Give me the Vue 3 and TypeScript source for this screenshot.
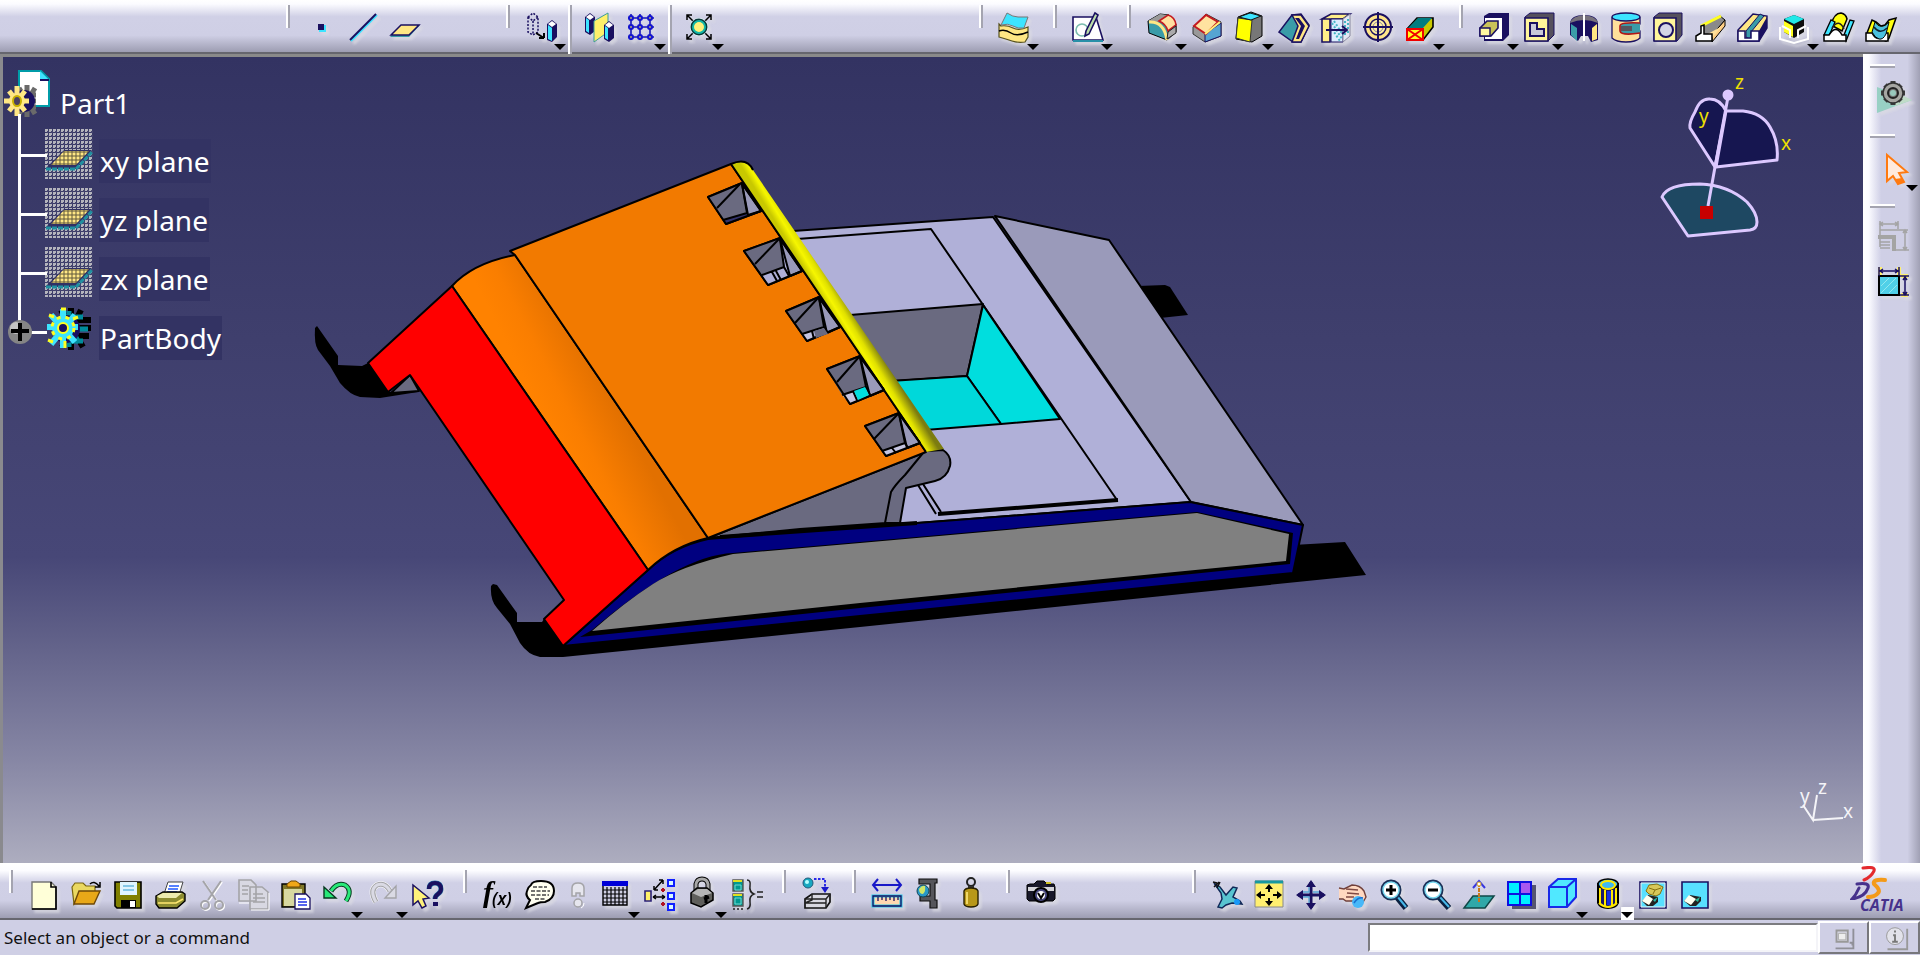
<script setup lang="ts">
import { ref } from 'vue'

interface Tool {
  icon: string
  label: string
  drop?: boolean
  lit?: boolean
  narrow?: boolean
  off?: boolean
}
interface Group {
  cls?: string
  tools: Tool[]
}
interface Pocket {
  id: string
  outline: string
  face: string
  strip: string
  side: string
  lines: string
  stripColor: string
}

const command = ref('')

const topLeft: Group[] = [
  { tools: [
    { icon: 'point', label: 'Point' },
    { icon: 'line', label: 'Line' },
    { icon: 'plane', label: 'Plane' }
  ] },
  { cls: 'far', tools: [{ icon: 'translate', label: 'Translation', drop: true }] },
  { cls: 'tall', tools: [
    { icon: 'mirror', label: 'Mirror' },
    { icon: 'pattern', label: 'Rectangular pattern', drop: true }
  ] },
  { cls: 'tall', tools: [{ icon: 'scale', label: 'Scaling', drop: true }] }
]

const topRight: Group[] = [
  { tools: [{ icon: 'surface', label: 'Thick surface', drop: true }] },
  { tools: [{ icon: 'sketch', label: 'Sketch', drop: true }] },
  { tools: [
    { icon: 'fillet', label: 'Edge fillet', drop: true },
    { icon: 'chamfer', label: 'Chamfer' },
    { icon: 'draft', label: 'Draft angle', drop: true },
    { icon: 'shell', label: 'Shell' },
    { icon: 'thickness', label: 'Thickness' },
    { icon: 'thread', label: 'Thread' },
    { icon: 'removeFace', label: 'Remove face', drop: true }
  ] },
  { tools: [
    { icon: 'pad', label: 'Pad', drop: true },
    { icon: 'pocket', label: 'Pocket', drop: true },
    { icon: 'shaft', label: 'Shaft' },
    { icon: 'groove', label: 'Groove' },
    { icon: 'hole', label: 'Hole' },
    { icon: 'rib', label: 'Rib' },
    { icon: 'slot', label: 'Slot' },
    { icon: 'stiffener', label: 'Stiffener', drop: true },
    { icon: 'loft', label: 'Multi-sections solid' },
    { icon: 'removeLoft', label: 'Removed multi-sections solid' }
  ] }
]

const bottomLeft: Group[] = [
  { tools: [
    { icon: 'newDoc', label: 'New' },
    { icon: 'open', label: 'Open' },
    { icon: 'save', label: 'Save' },
    { icon: 'print', label: 'Print' },
    { icon: 'cut', label: 'Cut', off: true },
    { icon: 'copy', label: 'Copy', off: true },
    { icon: 'paste', label: 'Paste' },
    { icon: 'undo', label: 'Undo', drop: true },
    { icon: 'redo', label: 'Redo', drop: true, off: true },
    { icon: 'help', label: "What's this?" }
  ] },
  { tools: [
    { icon: 'formula', label: 'Formula' },
    { icon: 'comment', label: 'Comment' },
    { icon: 'check', label: 'Check analysis', narrow: true, off: true },
    { icon: 'table', label: 'Design table', drop: true },
    { icon: 'relations', label: 'Knowledge inspector' },
    { icon: 'lock', label: 'Lock', drop: true },
    { icon: 'equations', label: 'Equivalent dimensions' }
  ] },
  { tools: [{ icon: 'catalog', label: 'Catalog' }] },
  { tools: [
    { icon: 'measure', label: 'Measure between' },
    { icon: 'caliper', label: 'Measure item' },
    { icon: 'weight', label: 'Measure inertia' }
  ] },
  { tools: [{ icon: 'camera', label: 'Capture' }] }
]

const bottomRight: Group = { tools: [
  { icon: 'fly', label: 'Fly mode' },
  { icon: 'fit', label: 'Fit all in' },
  { icon: 'pan', label: 'Pan' },
  { icon: 'rotate', label: 'Rotate' },
  { icon: 'zoomIn', label: 'Zoom in' },
  { icon: 'zoomOut', label: 'Zoom out' },
  { icon: 'normal', label: 'Normal view' },
  { icon: 'multi', label: 'Multi-view' },
  { icon: 'iso', label: 'Isometric view', drop: true },
  { icon: 'shading', label: 'Shading with edges', drop: true, lit: true },
  { icon: 'hide', label: 'Hide or show' },
  { icon: 'swap', label: 'Swap visible space' }
] }

const sideGroups: Tool[][] = [
  [{ icon: 'workbench', label: 'Part Design' }],
  [{ icon: 'select', label: 'Select', drop: true }],
  [
    { icon: 'exitDims', label: 'Dimension manager', off: true },
    { icon: 'dims', label: 'Dimensions' }
  ]
]

const planes = ['xy plane', 'yz plane', 'zx plane']

const icons: Record<string, string> = {
  point: `<path d="M14 14h7v7h-7z" fill="#3de4ff"/><path d="M13 13h6v6h-6z" fill="#1a1060"/>`,
  line: `<path d="M4 30L30 4" stroke="#3de4ff" stroke-width="2"/><path d="M3 29L29 3" stroke="#1a1060" stroke-width="2"/>`,
  plane: `<path d="M1 26l11-12h19L20 26z" fill="#3a9ca8"/><path d="M2 24l10-10h18l-10 10z" fill="#ffe784" stroke="#1a1060" stroke-width="1.5"/>`,
  translate: `<path d="M3 6l5-4 5 4v15l-5 3-5-3zM3 6l5 4 5-4M8 10v13" fill="none" stroke="#1a1060" stroke-width="1.5" stroke-dasharray="2 1.5"/><path d="M11 22l8 5M19 27v-5M19 27h-5" stroke="#000" stroke-width="2"/><path d="M22 13l5-4 5 4v13l-5 5-5-2z" fill="#1a1060"/><path d="M23 14l4 3v13l-4-2z" fill="#3de4ff"/><path d="M23 13l4-3 4 3-4 3z" fill="#fff"/>`,
  mirror: `<path d="M2 6l5-4 5 4v14l-5 4-5-3z" fill="#1a1060"/><path d="M3 7l3 2v13l-3-2z" fill="#3de4ff"/><path d="M3 6l4-3 4 3-4 3z" fill="#fff"/><path d="M11 10L25 2v19l-14 10z" fill="#fff06a" stroke="#3a9c98"/><path d="M21 14l5-4 5 4v13l-5 4-5-3z" fill="#1a1060"/><path d="M22 15l3 2v12l-3-2z" fill="#3de4ff"/><path d="M22 14l4-3 4 3-4 3z" fill="#fff"/>`,
  pattern: `<path d="M6 3v26M15 3v26M25 3v26M3 7h26M3 16h26M3 26h26" stroke="#1414b8" stroke-width="1.6"/><g fill="#b0a878" stroke="#1414d0" stroke-width="2"><circle cx="6" cy="7" r="2"/><circle cx="15" cy="7" r="2"/><circle cx="25" cy="7" r="2"/><circle cx="6" cy="16" r="2"/><circle cx="15" cy="16" r="2"/><circle cx="25" cy="16" r="2"/><circle cx="6" cy="26" r="2"/><circle cx="15" cy="26" r="2"/><circle cx="25" cy="26" r="2"/></g>`,
  scale: `<path d="M4 4l24 24M28 4L4 28M4 9V4h5M23 4h5v5M4 23v5h5M28 23v5h-5" fill="none" stroke="#000" stroke-width="1.5"/><circle cx="16" cy="16" r="9" fill="#e8ffff"/><circle cx="16" cy="16" r="7" fill="#fff27a" stroke="#083838" stroke-width="3"/><circle cx="16" cy="16" r="6" fill="none" stroke="#12b8a8" stroke-width="2"/>`,
  surface: `<path d="M1 13l2 2q6-1 12 2t15-1v10l-3 5q-7 1-13-1T1 26z" fill="#ffe784" stroke="#55501e" stroke-width="1.2"/><path d="M3 14L9 2q6 4 11 4t10 0l-4 11q-6 1-11-2t-12-1z" fill="#3de4ff" stroke="#777"/><path d="M1 20q6-2 12 2t17-1" fill="none" stroke="#000" stroke-width="1.5"/>`,
  sketch: `<path d="M3 6h21l7 23H1V6z" fill="#fff" stroke="#1a1060" stroke-width="1.6"/><path d="M1 30h30" stroke="#2890a8" stroke-width="2"/><circle cx="10" cy="19" r="6" fill="none" stroke="#7abcae" stroke-width="1.6"/><path d="M23 2l3 2-9 19-4 2 1-5z" fill="#bda" stroke="#1a1060" stroke-width="1.6"/>`,
  fillet: `<path d="M2 10l12-7 9 1 7 9v8l-9 8-18-7z" fill="#3a9ca8" stroke="#000"/><path d="M2 10l12-7 8 1-9 7z" fill="#999"/><path d="M3 11q15-1 18 18" fill="none" stroke="#ffe784" stroke-width="3"/><path d="M13 10l9-6q7 2 8 10l-8 6q-2-7-9-10z" fill="#ffe0a0" stroke="#c41a20" stroke-width="1.6"/><path d="M22 21l8-6v7l-9 6z" fill="#aaa" stroke="#222"/>`,
  chamfer: `<path d="M2 16L15 3l15 8v14l-16 6L2 23z" fill="#999" stroke="#333"/><path d="M30 12v13l-16 6v-8z" fill="#56a4d2" stroke="#1a1060"/><path d="M3 15L15 4l12 7-12 12z" fill="#ffe3a0" stroke="#c41a20" stroke-width="2"/><path d="M29 11L14 23" stroke="#fff17a" stroke-width="2"/>`,
  draft: `<path d="M5 6l13-5 11 4v20l-10 6-16-3z" fill="#777" stroke="#000"/><path d="M5 7l14 2-2 22-14-4z" fill="#ffff00" stroke="#333"/><path d="M6 6l11-4 11 3-10 4z" fill="#3de4ff" stroke="#111"/>`,
  shell: `<path d="M14 4l9-1 8 11-8 17h-8L1 21z" fill="#3a9ca8" stroke="#1a1060" stroke-width="1.5"/><path d="M14 4h9l8 11-8 16h-9l6-16z" fill="#ffe784" stroke="#1a1060" stroke-width="1.5"/><path d="M17 7h4l6 8-6 13h-3l5-13z" fill="#1a1060"/>`,
  thickness: `<path d="M2 8l9-5h19l-7 5zM2 8h8v23H2z" fill="#ffee88" stroke="#1a1060" stroke-width="1.6"/><path d="M11 8h12v23H11z" fill="#def" stroke="#1a1060"/><path d="M23 8l7-5v22l-7 6z" fill="#e4e8f4" stroke="#8888a0"/><path d="M12 12l10 16M12 18l8 12M14 10l9 14M25 10v16M28 8v15" stroke="#46b6c6" stroke-width="2" stroke-dasharray="2 2"/><path d="M6 19h20M22 15l5 4-5 4" fill="none" stroke="#1a1060" stroke-width="2"/>`,
  thread: `<circle cx="16" cy="16" r="13" fill="#ffe58a" stroke="#1a1060" stroke-width="2"/><circle cx="16" cy="16" r="8" fill="#fff0a0" stroke="#1a1060" stroke-width="1.5"/><circle cx="16" cy="16" r="5" fill="none" stroke="#8c86a0"/><path d="M1 16h30M16 1v30" stroke="#1a1060" stroke-width="2"/>`,
  removeFace: `<path d="M3 18L13 7h16v9L19 29H3z" fill="#c8c800" stroke="#000" stroke-width="1.6"/><path d="M4 17l10-10h14l-9 10z" fill="#007c80"/><path d="M3 18h16v11H3z" fill="#ffff20" stroke="#f00000" stroke-width="2"/><path d="M3 18l16 11M19 18L3 29" stroke="#f00000" stroke-width="2"/>`,
  pad: `<path d="M6 5l5-3h20v22l-6 6H6z" fill="#1a1060"/><path d="M7 7h17v21H7z" fill="#fff"/><path d="M2 17l7-7h11v7l-7 8H2z" fill="#c9c258" stroke="#1a1060" stroke-width="1.6"/><path d="M2 17h10v8H2z" fill="#fff9a0" stroke="#1a1060" stroke-width="1.4"/>`,
  pocket: `<path d="M2 6l5-4h24v22l-6 6H2z" fill="#55505c" stroke="#1a1060"/><path d="M2 7h23v23H2z" fill="#fff59a" stroke="#1a1060" stroke-width="1.6"/><path d="M7 12h7v6h7v7H7z" fill="#c9c9d8" stroke="#1a1060" stroke-width="2"/>`,
  shaft: `<path d="M2 12q1-8 14-8t14 8v17l-7 2-3-6h-7l-3 5-8-6z" fill="#1a1060"/><path d="M2 12q2-7 14-8 12 1 14 8-14-6-28 0z" fill="#77727c"/><path d="M3 13l6 4v13l-6-6z" fill="#3a9ca8"/><path d="M29 13l-5 4v13l5-2z" fill="#ffe784"/><path d="M16 2v28" stroke="#fff" stroke-width="2"/>`,
  groove: `<path d="M2 7v20q4 4 14 4t14-4v-7l-8-3 8-4V7z" fill="#ffe09a" stroke="#1a1060" stroke-width="1.3"/><ellipse cx="16" cy="6" rx="14" ry="4" fill="#3de4ff" stroke="#1a1060" stroke-width="1.3"/><path d="M30 12q-20-1-20 3v5q1 5 20 2" fill="#3a9ca8" stroke="#b01818" stroke-width="1.6"/><path d="M11 15h11v5H11z" fill="#56545e"/>`,
  hole: `<path d="M2 6l5-4h23v22l-5 6H2z" fill="#55505c" stroke="#1a1060"/><path d="M2 7h22v23H2z" fill="#fff59a" stroke="#1a1060" stroke-width="1.6"/><circle cx="14" cy="19" r="7" fill="#d5d5e6" stroke="#1a1060" stroke-width="2"/>`,
  rib: `<path d="M18 23L31 9v6L18 31z" fill="#ffcf84" stroke="#000"/><path d="M7 15L26 5l5 4-13 15-8 1z" fill="#8a8a8a" stroke="#000"/><path d="M12 24l16-9-10 12z" fill="#ffe09a"/><path d="M7 15L27 5" stroke="#ffff20" stroke-width="3"/><path d="M2 25l5-3v-7l3-1v9h8v7H2z" fill="#fff" stroke="#000" stroke-width="1.5"/>`,
  slot: `<path d="M2 19L17 3l14 2v12L23 30H2z" fill="#ffe784" stroke="#1a1060" stroke-width="1.4"/><path d="M10 20L24 3l4 2-13 16v8l-5-3z" fill="#3a9ca8" stroke="#1a1060"/><path d="M2 20h7v7h6v-7h8v10H2z" fill="#fff" stroke="#1a1060" stroke-width="1.5"/><path d="M23 20l8-14v11l-8 13z" fill="#1a1060"/>`,
  stiffener: `<path d="M2 16v12l14 4 14-4V16" fill="none" stroke="#fff" stroke-width="2"/><path d="M6 8l10-4 10 4v13l-10 6-10-6z" fill="#0e0e0e"/><path d="M6 8l10-4 10 4-10 5z" fill="#20e8e8"/><path d="M6 10l9 5v11l-9-5z" fill="#ffff20"/><path d="M4 15l8 4v8M28 15l-8 4v8" fill="none" stroke="#fff" stroke-width="2"/>`,
  loft: `<path d="M8 14q3-12 10-12 5 1 6 6l-5 12z" fill="#ffff10" stroke="#000" stroke-width="1.5"/><path d="M1 24L8 9l4 2-6 14zM21 24l6-15 4 1-8 20z" fill="#3de4ff" stroke="#000" stroke-width="1.3"/><path d="M9 17q7-10 12 1" fill="none" stroke="#222" stroke-width="1.5"/><path d="M1 24h5q7-11 13 0h4v6H1z" fill="#fff" stroke="#000" stroke-width="1.5"/>`,
  removeLoft: `<path d="M2 22L7 9l4 2 5 4 4-1 4-5 7-2-7 20-3 3z" fill="#ffff10" stroke="#000" stroke-width="1.5"/><path d="M1 22h6q6 11 12 0h4v8H1z" fill="#fff" stroke="#000" stroke-width="1.5"/><path d="M10 11q6 9 14 0l-3 12q-3 6-7 5-4-1-7-7z" fill="#4ac0de" stroke="#000"/><path d="M9 16q6 8 13 1" fill="none" stroke="#123" stroke-width="1.4"/>`,
  newDoc: `<path d="M4 3h19l5 5v22H4z" fill="#ffffd8" stroke="#777" stroke-width="1.4"/><path d="M23 3v5h5v22H4" fill="none" stroke="#000" stroke-width="1.6"/>`,
  open: `<path d="M2 8l3-4h8l3 3h9v7H9L4 25z" fill="#ead860" stroke="#786410" stroke-width="1.2"/><path d="M9 12h21l-6 13H4z" fill="#e8a818" stroke="#6e4808" stroke-width="1.4"/><path d="M20 5q4-4 9 2M30 3v5h-5" fill="none" stroke="#000" stroke-width="1.5"/>`,
  save: `<path d="M3 3h26v26H5l-2-2z" fill="#808000" stroke="#000" stroke-width="1.6"/><path d="M8 3h17v13H8z" fill="#dff4ff"/><path d="M11 7h11M11 11h11" stroke="#68b8e0" stroke-width="1.5"/><path d="M9 21h15v8H9z" fill="#000"/><path d="M18 22h5v6h-5z" fill="#fff"/>`,
  print: `<path d="M10 15l4-12h15l-4 13z" fill="#fff" stroke="#444"/><path d="M15 7h10M14 10h10M13 13h10" stroke="#2058ff" stroke-width="1.6"/><path d="M2 17l7-4h19l3 2v7l-8 7H5l-3-4z" fill="#8c8c30" stroke="#000" stroke-width="1.4"/><path d="M3 17l6-3h19l-6 5H5z" fill="#ecebae"/><path d="M4 24h18l7-4" fill="none" stroke="#ffe870" stroke-width="1.6"/>`,
  cut: `<g transform="translate(1 1)" stroke="#fff" stroke-width="2" fill="none"><path d="M7 2l13 19M25 2L12 21"/><circle cx="9" cy="26" r="4"/><circle cx="23" cy="26" r="4"/></g><g stroke="#a4a4a8" stroke-width="2" fill="none"><path d="M7 2l13 19M25 2L12 21"/><circle cx="9" cy="26" r="4"/><circle cx="23" cy="26" r="4"/></g>`,
  copy: `<g fill="#d8d8e2" stroke="#a4a4a8" stroke-width="1.6"><path d="M1 1h12l5 5v16H1zM12 8h12l6 5v17H12z"/><path d="M4 7h7M4 11h6M4 15h6M15 15h10M15 19h12M15 23h12"/></g><path d="M31 14v17H13M1 24h10" fill="none" stroke="#fff"/>`,
  paste: `<path d="M2 5h23v23H2z" fill="#807828" stroke="#000" stroke-width="1.4"/><path d="M4 10h18v17H4z" fill="#d8d8a0"/><path d="M7 8V5l4-3h5l4 3v3z" fill="#f0a818" stroke="#6a4400"/><path d="M15 15h11l4 4v11H15z" fill="#fff" stroke="#1a1060" stroke-width="1.3"/><path d="M18 20h8M18 23h9M18 26h9" stroke="#2030e8" stroke-width="1.6"/>`,
  undo: `<path d="M9 12q6-9 14-6 8 5 1 16" fill="none" stroke="#083820" stroke-width="5"/><path d="M9 12q6-9 14-6 8 5 1 16" fill="none" stroke="#28e878" stroke-width="3"/><path d="M2 8v11h12z" fill="#28e878" stroke="#083820" stroke-width="1.4"/>`,
  redo: `<path d="M23 12q-5-9-13-6-8 5-1 17" fill="none" stroke="#fff" stroke-width="6"/><path d="M23 12q-5-9-13-6-8 5-1 17" fill="none" stroke="#a4a4a8" stroke-width="5"/><path d="M23 12q-5-9-13-6-8 5-1 17" fill="none" stroke="#dadae4" stroke-width="3"/><path d="M29 7v12H18z" fill="#dadae4" stroke="#a4a4a8" stroke-width="1.4"/>`,
  help: `<path d="M1 6v20l5-4 4 7 4-2-3-7 6-1z" fill="#fff27a" stroke="#1a1060" stroke-width="1.5"/><path d="M17 10q0-6 6-6t6 6q0 3-3 5t-3 5" fill="none" stroke="#2a7aa8" stroke-width="5"/><path d="M17 10q0-6 6-6t6 6q0 3-3 5t-3 5" fill="none" stroke="#1a1060" stroke-width="4"/><path d="M21 23h5v4h-5z" fill="#1a1060"/>`,
  formula: `<text x="1" y="23" font-family="Liberation Serif, serif" font-style="italic" font-weight="700" font-size="30" fill="#000">f</text><text x="10" y="26" font-family="Noto Sans, sans-serif" font-style="italic" font-weight="600" font-size="17" fill="#000">(x)</text>`,
  comment: `<path d="M7 6q1-4 10-4 13 0 13 10 0 8-9 11-5 0-7 1L2 29l4-8Q1 17 3 12q1-4 4-6z" fill="#fffff0" stroke="#000" stroke-width="2"/><path d="M9 8h14M7 12h19M7 16h18M11 20h10" stroke="#444" stroke-width="1.6" stroke-dasharray="4 1.5"/>`,
  check: `<path d="M10 17V9q0-5 6-5t6 5v8h-4v-3h-4v3z" fill="#e6e6ee" stroke="#a4a4a8" stroke-width="1.5"/><circle cx="16" cy="24" r="4" fill="#e6e6ee" stroke="#a4a4a8" stroke-width="1.5"/><path d="M19 29q3-1 3-5" stroke="#fff" fill="none"/>`,
  table: `<path d="M4 6h24v20H4z" fill="#cfcfe2" stroke="#000" stroke-width="1.4"/><path d="M4 11h24M4 15h24M4 19h24M4 23h24M8 8v18M12 8v18M16 8v18M20 8v18M24 8v18" stroke="#000" stroke-width="1.2"/><path d="M3 2h26v5H3z" fill="#0000d8"/>`,
  relations: `<path d="M1 12h6v10H1z" fill="#fff06a" stroke="#2a2078" stroke-width="1.6"/><path d="M9 18h12M9 18l3-2M9 18l3 2M21 18l-3-2M21 18l-3 2M10 11l9-10M19 1v4M19 1h-4M10 11v-4M10 11h4" stroke="#000" stroke-width="1.5"/><g fill="#d8f8ff" stroke="#1020ff" stroke-width="2"><path d="M24 1h6v6h-6zM24 14h6v6h-6zM24 25h6v6h-6z"/></g><path d="M17 11h4M19 9v4M17 25h4M19 23v4" stroke="#b01020" stroke-width="2"/>`,
  lock: `<path d="M10 13V5q1-5 6-5t6 5v8" fill="none" stroke="#000" stroke-width="5"/><path d="M10 13V5q1-5 6-5t6 5v8" fill="none" stroke="#a8a8a8" stroke-width="3"/><path d="M5 14l6-5h10l6 5v7l-12 7-10-4z" fill="#60605c" stroke="#000" stroke-width="1.5"/><path d="M6 14l6-4h9l5 4-11 4z" fill="#b6b6b6"/><path d="M20 16v8M18 20l5-2" stroke="#000" stroke-width="3"/>`,
  equations: `<path d="M2 1h10v11H2zM2 15h10v12H2z" fill="#009890" stroke="#555" stroke-width="1.4"/><path d="M2 2h9M2 16h9" stroke="#e0e020" stroke-width="2"/><path d="M4 6h6v5H4zM4 19h6v6H4z" fill="none" stroke="#70d8d0"/><path d="M16 1q4 0 3 6t4 8q-5 2-4 8t-3 7M26 13h6M26 18h6M2 30h2M6 30h2M10 30h2" fill="none" stroke="#222" stroke-width="1.5"/>`,
  catalog: `<circle cx="7" cy="4" r="5" fill="#18a8c0" stroke="#205878"/><circle cx="6" cy="3" r="2" fill="#b8ffff"/><path d="M13 0h11v10" fill="none" stroke="#2828e8" stroke-width="2" stroke-dasharray="2.5 1.5"/><path d="M20 8h8l-4 6z" fill="#1818c8"/><path d="M4 20l7-5h18v8l-4 6H4z" fill="#d8d8e0" stroke="#111" stroke-width="1.7"/><path d="M4 20h21v9M25 20l4-5M11 15v6l-7 3h21" fill="none" stroke="#222" stroke-width="1.4"/>`,
  measure: `<path d="M2 6h28M7 0L2 6l5 6M25 0l5 6-5 6" fill="none" stroke="#1818c8" stroke-width="2"/><path d="M2 17h28v10H2z" fill="#ffd8b0" stroke="#28c8e8" stroke-width="3"/><path d="M2 17h28v10H2zM7 18v4M11 18v3M15 18v4M19 18v3M23 18v4M27 18v3" fill="none" stroke="#1a1060" stroke-width="1.3"/>`,
  caliper: `<path d="M6 0h18v4h-2v17h2v8h-7v-7H7v-5h10V5H6z" fill="#55555a" stroke="#111" stroke-width="1.2"/><circle cx="10" cy="12" r="6" fill="#2898c8" stroke="#145"/><path d="M6 10q3-4 6-3 1 5-2 8-4 0-4-5z" fill="#d0e868"/>`,
  weight: `<circle cx="16" cy="3" r="4" fill="none" stroke="#222" stroke-width="2"/><path d="M13 7h6v4h-6z" fill="#333"/><path d="M9 12q1-3 7-3t7 3v13q-1 3-7 3t-7-3z" fill="#b89818" stroke="#2a2200" stroke-width="1.4"/><path d="M12 13v12" stroke="#f0d868" stroke-width="2"/>`,
  camera: `<path d="M2 6l3-1h4l3-3h7l3 3h7l1 3v12l-2 2H4l-2-2z" fill="#18182a" stroke="#000"/><path d="M3 8h26v4H3z" fill="#d4d4d8"/><circle cx="16" cy="16" r="7" fill="#484880" stroke="#000" stroke-width="2"/><circle cx="16" cy="16" r="4" fill="#fff"/><path d="M13 14l3 5 3-5" fill="none" stroke="#000" stroke-width="2"/><path d="M21 4h5" stroke="#d0c020" stroke-width="2"/>`,
  fly: `<path d="M3 4l6 4 6 8 7-8 4 1-4 9 7 4 2 3-10-1-6 2-4 3-4-1 4-8-1-6z" fill="#58c4d0" stroke="#102858" stroke-width="1.5"/><path d="M3 8l5-5M2 3l4 1M9 3L6 9" stroke="#111" stroke-width="1.5"/><circle cx="26" cy="23" r="3" fill="#1898f8"/>`,
  fit: `<path d="M2 2h28v26H2z" fill="#ffef70" stroke="#888"/><path d="M2 3h28" stroke="#1898a0" stroke-width="3"/><path d="M16 8v5M16 19v5M6 16h6M20 16h6" stroke="#000" stroke-width="2"/><path d="M12 10l4-5 4 5zM12 22l4 5 4-5zM8 12l-5 4 5 4zM24 12l5 4-5 4z" fill="#000"/>`,
  pan: `<path d="M16 3v26M3 16h26" stroke="#1a1060" stroke-width="3"/><path d="M11 8l5-7 5 7zM11 24l5 7 5-7zM8 11l-7 5 7 5zM24 11l7 5-7 5z" fill="#1a1060"/><path d="M14 8v5H8M24 13h-6M14 24v-6H8" fill="none" stroke="#58a8d8" stroke-width="1.3"/>`,
  rotate: `<path d="M2 9l5 1 8-4q8 0 12 6l2 6-4 7-8-3H9l-3-2H2" fill="#ffd8c0" stroke="#70403c" stroke-width="1.4"/><path d="M9 10l12 1M10 14l12 1M9 18h8" stroke="#804a44" stroke-width="1.4" fill="none"/><circle cx="21" cy="23" r="6" fill="#48b8f8"/><path d="M17 24q4-6 9-5" fill="none" stroke="#1870d0" stroke-width="1.5"/>`,
  zoomIn: `<path d="M18 18l9 11" stroke="#0a2040" stroke-width="6"/><path d="M18 17l9 11" stroke="#48b8e8" stroke-width="2"/><circle cx="12" cy="11" r="9" fill="#fff" stroke="#1a3058" stroke-width="3"/><circle cx="12" cy="11" r="8" fill="#fff" stroke="#78d8f0" stroke-width="1.5"/><path d="M12 6v10M7 11h10" stroke="#000" stroke-width="3"/>`,
  zoomOut: `<path d="M18 18l10 11" stroke="#0a2040" stroke-width="6"/><path d="M18 17l10 11" stroke="#48b8e8" stroke-width="2"/><circle cx="12" cy="11" r="9" fill="#fff" stroke="#1a3058" stroke-width="3"/><circle cx="12" cy="11" r="8" fill="#fff" stroke="#78d8f0" stroke-width="1.5"/><path d="M7 11h10" stroke="#000" stroke-width="3"/>`,
  normal: `<path d="M1 29l9-12h21l-9 12z" fill="#30a8a8" stroke="#104848" stroke-width="1.5"/><path d="M16 23V4" stroke="#c87818" stroke-width="2" stroke-dasharray="4 1"/><path d="M10 9l6-7 6 7" fill="none" stroke="#3838e0" stroke-width="2"/><circle cx="16" cy="5" r="2" fill="#fff" stroke="#d8a820"/>`,
  multi: `<path d="M7 6h24v24H7z" fill="#555570"/><path d="M3 3h23v23H3z" fill="#00f0ff" stroke="#1010e0" stroke-width="2"/><path d="M16 4h9v10h-9z" fill="#a858f0"/><path d="M15 3v23M3 15h23" stroke="#1010e0" stroke-width="2"/>`,
  iso: `<path d="M2 8l9-8h18v18l-9 10H2z" fill="#50e8ff" stroke="#1828e8" stroke-width="2"/><path d="M2 8h18v20M20 8l9-8" fill="none" stroke="#1828e8" stroke-width="2"/>`,
  shading: `<path d="M6 5v19q2 5 10 5t10-5V5z" fill="#18186a" stroke="#000" stroke-width="2"/><path d="M8 9v15M24 9v15M13 11v16M20 11v16" stroke="#ffe800" stroke-width="2"/><path d="M15 12h4v14h-4z" fill="#1830e0"/><ellipse cx="16" cy="5" rx="10" ry="5" fill="#40b8f0" stroke="#000" stroke-width="1.5"/><ellipse cx="16" cy="6" rx="7" ry="4" fill="none" stroke="#ffe800" stroke-width="2"/><path d="M7 24q9 8 18 0" fill="none" stroke="#ffe800" stroke-width="2"/>`,
  hide: `<path d="M3 3h26v26H3z" fill="#58e0ff" stroke="#1a1060" stroke-width="1.6"/><path d="M4 4h24v24H4z" fill="none" stroke="#eee"/><path d="M9 12l3-6 8-1 6 3-3 7-4 2-7-2z" fill="#d8c858" stroke="#857010"/><path d="M12 9l6 2-2 4M18 11l6-2" fill="none" stroke="#857010"/><path d="M5 22l6-6 10 2v5l-5 4h-6z" fill="#222"/><path d="M5 22l5-6 6 4-4 6z" fill="#fffff0"/><path d="M16 21l5-3-3 5z" fill="#28b8a8"/>`,
  swap: `<path d="M3 3h26v26H3z" fill="#58e0ff" stroke="#1a1060" stroke-width="1.6"/><path d="M5 22l6-6 11 2v4l-5 5h-6z" fill="#222"/><path d="M5 22l5-6 7 4-5 6z" fill="#fffff0"/><path d="M16 21l5-3-2 5z" fill="#28b898"/>`,
  workbench: `<path d="M0 7l35 13L0 33z" fill="#98d0c4"/><path d="M18 12l17 8-17 6z" fill="#c0dcc8"/><g transform="translate(16 13)"><g stroke="#3a3a3a" stroke-width="5"><path d="M0-12V12M-12 0H12M-8-8L8 8M8-8L-8 8"/></g><circle r="10" fill="#a6a6a2" stroke="#333" stroke-width="1.5"/><circle r="5" fill="#777" stroke="#222" stroke-width="2"/><circle r="3" fill="#98c8bc"/></g>`,
  select: `<g transform="translate(2 4)"><path d="M8 1v26l6-5 5 8 6-2-5-9 8-1z" fill="#ffeadd" stroke="#ff7a10" stroke-width="2"/><path d="M16 25l3 5 6-2-2-4" fill="#ff7a10"/></g>`,
  exitDims: `<g fill="none" stroke="#a4a4a4" stroke-width="1.5"><path d="M3 1v26M21 1v8M3 4h18M3 10h28M28 10v20M19 30h13M6 2L3 4l3 2M18 2l3 2-3 2M26 13l2-3 2 3M26 27l2 3 2-3"/><path d="M1 17h16v14" stroke-width="4"/><path d="M3 22h10M3 25h10M3 28h10"/></g>`,
  dims: `<path d="M2 10h20v19H2z" fill="#50d0e8" stroke="#000" stroke-width="2"/><path d="M4 27l15-15M4 20l8-8M12 27l8-8" stroke="#90e8f0"/><path d="M3 1v8M22 1v8M24 10h7M24 29h7" stroke="#fff070" stroke-width="4"/><path d="M2 1v9M22 1v9M3 5h18M23 10h9M23 29h9M28 11v18M6 3L3 5l3 2M18 3l3 2-3 2M26 14l2-3 2 3M26 26l2 3 2-3" fill="none" stroke="#1a1060" stroke-width="1.5"/>`,
  message: `<path d="M8 8h12v12H8z" fill="#d8d8e6" stroke="#999" stroke-width="2"/><path d="M10 11h8v7h-8z" fill="#eee" stroke="#aaa"/><path d="M26 6v21H7M22 21h3v3" fill="none" stroke="#909098" stroke-width="2"/>`,
  info: `<circle cx="16" cy="14" r="9" fill="#e2e2ea" stroke="#999"/><path d="M16 8v2M14 13h2v7M13 20h6" stroke="#777" stroke-width="2"/><path d="M29 6v22H8" fill="none" stroke="#999" stroke-width="2"/>`
}

const pockets: Pocket[] = [
  { id: 'a', outline: '708,197 742,183 761,211 726,224', face: '708,197 742,183 747,213 723,220', strip: '723,220 747,213 748,216 726,224', side: '742,184 761,211 748,215', lines: 'M717 208L740 184M742 184L747 213L723 220', stripColor: '#33336c' },
  { id: 'b', outline: '744,251 780,238 802,271 768,285', face: '744,251 780,238 785,267 762,275', strip: '762,275 785,267 789,276 768,285', side: '780,239 802,271 790,276', lines: 'M755 264L779 239M780 239L784 267L762 275M784 267L789 276M772 272L777 281M776 271L781 280', stripColor: '#b0b0d8' },
  { id: 'c', outline: '786,311 819,297 840,327 807,341', face: '786,311 819,297 825,326 802,334', strip: '802,334 813,331 814,338 807,341', side: '819,298 840,327 827,333', lines: 'M795 323L818 298M819 298L824 327L802 334M824 327L828 333M812 331L814 339', stripColor: '#c4c4e0' },
  { id: 'd', outline: '827,369 860,356 884,390 850,404', face: '827,369 860,356 866,387 842,395', strip: '842,395 853,391 857,400 850,404', side: '860,357 884,390 870,396', lines: 'M837 382L859 357M860 357L866 387L842 395M866 387L870 395M853 391L857 400', stripColor: '#c4c4e0' },
  { id: 'e', outline: '865,426 899,413 920,443 886,456', face: '865,426 899,413 905,443 882,451', strip: '882,451 905,443 908,448 886,456', side: '899,414 920,443 907,448', lines: 'M874 439L898 414M899 414L905 443L882 451M905 443L908 448M892 448L896 453', stripColor: '#c4c4e0' }
]
</script>

<template>
  <main class="app">
    <header class="bar top">
      <div v-for="(g, i) in topLeft" :key="'tl' + i" class="group" :class="g.cls">
        <button v-for="t in g.tools" :key="t.icon" type="button" class="tool" :class="{ drop: t.drop }" :aria-label="t.label">
          <svg viewBox="0 0 32 32" v-html="icons[t.icon]"></svg>
        </button>
      </div>
      <div class="space"></div>
      <div v-for="(g, i) in topRight" :key="'tr' + i" class="group" :class="{ next: i > 0 }">
        <button v-for="t in g.tools" :key="t.icon" type="button" class="tool" :class="{ drop: t.drop }" :aria-label="t.label">
          <svg viewBox="0 0 32 32" v-html="icons[t.icon]"></svg>
        </button>
      </div>
    </header>

    <div class="work">
      <section class="view" aria-label="3D view">
        <svg class="scene" viewBox="3 57 1860 806" preserveAspectRatio="xMinYMin meet">
          <defs>
            <linearGradient id="bend" gradientUnits="userSpaceOnUse" x1="550" y1="428" x2="612" y2="396">
              <stop offset="0" stop-color="#ff8200" />
              <stop offset="0.35" stop-color="#fa7e00" />
              <stop offset="1" stop-color="#e27000" />
            </linearGradient>
            <linearGradient id="tube" gradientUnits="userSpaceOnUse" x1="828" y1="308" x2="846" y2="297">
              <stop offset="0" stop-color="#c8c800" />
              <stop offset="0.3" stop-color="#f6f600" />
              <stop offset="0.55" stop-color="#e0e000" />
              <stop offset="1" stop-color="#7c7c10" />
            </linearGradient>
          </defs>
          <g stroke="#000" stroke-width="2" stroke-linejoin="round">
            <polygon points="1138,286 1165,285 1170,287 1188,315 1160,318" fill="#000" stroke="none" />
            <path d="M317 326L338 356V365L362 366L368 363L388 392L418 392L380 398L360 397Q350 395 340 383L330 366L318 350Q314 344 315 328Z" fill="#000" stroke="none" />
            <path d="M493 584L497 585L517 613V622H542L544 619L563 646L1293 545L1345 542L1366 575L860 627L563 657H540Q528 655 520 643L510 624L497 608Q490 600 491 586Z" fill="#000" stroke="none" />
            <polygon points="391,393 410,375 419,391" fill="#6a6a80" />
            <polygon points="793,231 993,217 1191,502 917,523 870,525" fill="#b0b0d8" />
            <polygon points="995,216 1109,240 1303,525 1191,502" fill="#9a9aba" />
            <path d="M797 239L931 229L1117 500" fill="none" />
            <polygon points="850,315 983,304 967,376 895,381" fill="#6a6a80" />
            <polygon points="983,305 967,376 1001,424 1060,419" fill="#00dede" />
            <polygon points="890,381 967,376 1001,424 925,430" fill="#00d8da" />
            <path d="M918 485L936 514M923 484L941 512" fill="none" />
            <path d="M938 514L1118 500" fill="none" stroke-width="4" />
            <path d="M563 646L648 570Q672 547 708 539L800 531L917 523L1190 502L1303 525L1293 573L860 616Z" fill="#000080" />
            <path d="M580 637L592 630Q680 555 733 553L860 542L1197 512L1293 533L1290 564L860 608Z" fill="#000" stroke="none" />
            <path d="M592 631Q625 602 653 584T733 554L860 543L1197 513L1289 534L1286 561L860 603Z" fill="#808080" stroke="none" />
            <path d="M708 538L923 453L886 523L800 529Z" fill="#6a6a80" />
            <path d="M923 453L926 451L943 450Q952 456 950 466Q947 478 935 481L906 488L900 523H885L891 492Q895 485 905 475Z" fill="#6a6a80" />
            <path d="M720 537L917 523" fill="none" stroke-width="4" />
            <path d="M452 286Q473 263 515 255L708 538Q673 546 648 570Z" fill="url(#bend)" />
            <polygon points="510,251 731,164 926,452 708,538 515,255" fill="#f27a00" />
            <path d="M731 164Q747 156 753 170L944 449L926 452Z" fill="url(#tube)" stroke="none" />
            <path d="M753 170Q747 157 731 164L926 452" fill="none" />
            <polygon points="452,286 368,363 388,392 410,375 564,600 544,619 563,646 648,570" fill="#ff0000" />
          </g>
          <g v-for="p in pockets" :key="p.id" stroke="#000" stroke-width="2" stroke-linejoin="round">
            <polygon :points="p.outline" fill="#b0b0d8" />
            <polygon :points="p.face" fill="#6a6a80" stroke="none" />
            <polygon :points="p.strip" :fill="p.stripColor" stroke="none" />
            <polygon :points="p.side" fill="#9a9aba" />
            <path :d="p.lines" fill="none" />
            <polygon :points="p.outline" fill="none" />
          </g>
          <polygon points="854,391 865,387 869,395 858,400" fill="#00dede" />
          <polygon points="814,331 824,328 828,334 816,338" fill="#6a6a80" />

          <g stroke="#dcc8ff" stroke-width="3" stroke-linejoin="round">
            <path d="M1726 111Q1720 99 1710 99Q1700 98 1695 112Q1689 122 1690 128L1715 167Z" fill="#161650" />
            <path d="M1726 111H1743Q1762 113 1770 127Q1779 142 1777 160L1716 167Z" fill="#161650" />
            <path d="M1662 197Q1667 184 1700 184Q1728 185 1747 202Q1757 213 1757 222Q1757 229 1750 230L1688 236Z" fill="#1e4862" />
            <path d="M1728 97L1715 167L1708 206" fill="none" />
            <circle cx="1728" cy="95" r="4" fill="#dcc8ff" />
          </g>
          <rect x="1700" y="206" width="13" height="13" fill="#c80000" />
          <g class="mark">
            <text x="1735" y="89">z</text>
            <text x="1699" y="123">y</text>
            <text x="1781" y="150">x</text>
          </g>
          <path d="M1817 795L1813 820L1803 805M1813 820L1843 818" fill="none" stroke="#f4f4f8" stroke-width="2" />
          <g class="axis">
            <text x="1818" y="794">z</text>
            <text x="1800" y="803">y</text>
            <text x="1843" y="818">x</text>
          </g>
        </svg>

        <ul class="tree">
          <li class="root">
            <svg class="rooticon" viewBox="0 0 48 50">
              <path d="M15 2h22l8 8v27H15z" fill="#fff" stroke="#009ca8" stroke-width="2" />
              <path d="M36 2l9 9h-9z" fill="#3de4ff" />
              <path d="M36 11h9" stroke="#1a1060" stroke-width="2" />
              <g transform="translate(23 32)" stroke="#6a6a6a" stroke-width="5"><path d="M0-16V16M-8-13L8 13M8-13L-8 13M-4 -6H9M-4 0H9M-4 6H9" /></g>
              <circle cx="20" cy="32" r="11" fill="#1a1060" />
              <g transform="translate(13 32)" stroke="#ffe784" stroke-width="5"><path d="M0-15V15M-13 0H12M-8-10L8 10M8-10L-8 10" /><circle r="8" fill="#ffe784" stroke="none" /><ellipse rx="4" ry="5" fill="#4a4060" stroke="#c8b000" stroke-width="2" /></g>
            </svg>
            <span class="name plain">Part1</span>
          </li>
          <li v-for="p in planes" :key="p" class="node">
            <svg class="nodeicon" viewBox="0 0 48 50">
              <defs>
                <pattern id="mesh" width="4" height="4" patternUnits="userSpaceOnUse"><path d="M0 1h4M1 0v4" stroke="#b4b4bc" stroke-width="2" stroke-dasharray="3 1" /><path d="M2 2h2v2H2z" fill="#45456e" /></pattern>
                <pattern id="gold" width="4" height="4" patternUnits="userSpaceOnUse"><path d="M0 0h4v4H0z" fill="#ffe784" /><path d="M3 0v4M0 3h4" stroke="#60583c" /></pattern>
              </defs>
              <path d="M0 0h48v50H0z" fill="url(#mesh)" />
              <path d="M1 39l18-18h28L31 40z" fill="#303064" />
              <path d="M6 36l13-14h25L31 36z" fill="url(#gold)" />
              <path d="M1 40h30l16-17" fill="none" stroke="#2090a0" stroke-width="3" stroke-dasharray="5 1" />
            </svg>
            <span class="name">{{ p }}</span>
          </li>
          <li class="node last">
            <button type="button" class="expand" aria-label="Expand PartBody">
              <svg viewBox="0 0 26 26"><circle cx="13" cy="13" r="12" fill="#858585" /><circle cx="9" cy="9" r="6" fill="#c4c4c4" /><path d="M13 4v18M4 12h18" stroke="#000" stroke-width="4" /></svg>
            </button>
            <svg class="nodeicon" viewBox="0 0 48 50">
              <g transform="translate(26 22)" stroke="#000" stroke-width="6"><path d="M0-20V22M-10-18L12 19M10-18L-9 19M0-8H20M0 0H20M0 8H18" /></g>
              <g transform="translate(24 23)" stroke="#008c9c" stroke-width="5"><path d="M0-18V18M0-12H14M0 0H19M0 12H14M-6-16L10 14" /></g>
              <circle cx="21" cy="23" r="14" fill="#1a1060" />
              <g transform="translate(18 22)"><g stroke="#3de4ff" stroke-width="6"><path d="M0-19V20M-16-1H15M-12-13L12 14M12-13L-12 16" /></g><circle r="11" fill="#3de4ff" /><circle r="11" fill="none" stroke="#ffff20" stroke-width="3" stroke-dasharray="4 5" /><path d="M-14 -13l5 2M-15 12l5 2M-2-19h5M2 13v7M10-9l5-2" stroke="#ffff20" stroke-width="3" /><circle r="5" fill="#1a1060" stroke="#ffff20" stroke-width="2" /></g>
            </svg>
            <span class="name">PartBody</span>
          </li>
        </ul>
      </section>

      <aside class="side">
        <div v-for="(g, i) in sideGroups" :key="i" class="sgroup">
          <button v-for="t in g" :key="t.icon" type="button" class="tool" :class="{ drop: t.drop, off: t.off }" :aria-label="t.label">
            <svg viewBox="0 0 34 34" v-html="icons[t.icon]"></svg>
          </button>
        </div>
      </aside>
    </div>

    <nav class="bar bottom" aria-label="Standard and view tools">
      <div v-for="(g, i) in bottomLeft" :key="'bl' + i" class="group" :class="{ next: i > 0 }">
        <button v-for="t in g.tools" :key="t.icon" type="button" class="tool" :class="{ drop: t.drop, narrow: t.narrow, off: t.off }" :aria-label="t.label">
          <svg viewBox="0 0 32 32" v-html="icons[t.icon]"></svg>
        </button>
      </div>
      <div class="space"></div>
      <div class="group">
        <button v-for="t in bottomRight.tools" :key="t.icon" type="button" class="tool" :class="{ drop: t.drop, lit: t.lit }" :aria-label="t.label">
          <svg viewBox="0 0 32 32" v-html="icons[t.icon]"></svg>
        </button>
      </div>
      <div class="brand">
        <svg viewBox="0 0 60 34" aria-hidden="true">
          <g fill="none" stroke-width="3" stroke-linecap="round">
            <path d="M13 2Q26 0 24 5Q21 11 14 14" stroke="#e42a2e" />
            <path d="M7 18Q20 16 18 22Q15 31 2 33Q6 29 9 22" stroke="#46328c" />
            <path d="M35 14Q22 13 24 18Q31 24 28 27Q25 31 18 31" stroke="#f49a18" stroke-width="4" />
          </g>
        </svg>
        <span>CATIA</span>
      </div>
    </nav>

    <footer class="status">
      <label for="command" class="hint">Select an object or a command</label>
      <input id="command" v-model="command" type="text" class="command" autocomplete="off" />
      <button type="button" class="flat" aria-label="Messages"><svg viewBox="0 0 32 32" v-html="icons.message"></svg></button>
      <button type="button" class="flat" aria-label="Information"><svg viewBox="0 0 32 32" v-html="icons.info"></svg></button>
    </footer>
  </main>
</template>

<style>
html,
body {
  margin: 0;
  height: 100%;
}
#app {
  height: 100%;
}
</style>

<style scoped>
.app {
  display: flex;
  flex-direction: column;
  min-height: 100vh;
  background: #cfcfe5;
  font-family: "Noto Sans", "Open Sans", sans-serif;
  overflow: hidden;
}
button {
  margin: 0;
  padding: 0;
  border: 0;
  background: none;
  font: inherit;
}
.bar {
  display: flex;
  align-items: flex-start;
  flex: none;
  box-sizing: border-box;
  background: linear-gradient(#fff, #fbfbff 8%, #d0d0e6 32%, #cfcfe5 68%, #9d9db2);
}
.top {
  height: 52px;
  padding: 5px 18px 0 286px;
}
.bottom {
  height: 55px;
  padding: 10px 8px 0 9px;
  background: linear-gradient(#fff, #fcfcff 14%, #d0d0e6 36%, #cfcfe5 68%, #9d9db2);
}
.space {
  flex: 1;
}
.group {
  position: relative;
  display: flex;
  flex: none;
  padding-left: 14px;
}
.group::before {
  content: "";
  position: absolute;
  left: 0;
  top: 0;
  width: 2px;
  height: 23px;
  background: #fff;
  border-right: 2px solid #a4a4b0;
}
.bottom .group::before {
  top: -3px;
}
.group.next {
  margin-left: 15px;
}
.bottom .group.next {
  margin-left: 14px;
}
.group.far {
  margin-left: 80px;
}
.group.tall {
  margin-left: 3px;
  padding-left: 10px;
}
.group.tall::before {
  height: 49px;
}
.tool {
  position: relative;
  display: flex;
  align-items: center;
  justify-content: center;
  width: 42px;
  height: 44px;
}
.tool svg {
  width: 32px;
  height: 32px;
  overflow: visible;
  fill: none;
  filter: drop-shadow(3px 3px 1px rgba(220, 220, 226, 0.7));
}
.tool.off svg {
  filter: none;
}
.tool.narrow {
  width: 33px;
}
.group .drop {
  margin-right: 3px;
}
.drop::after {
  content: "";
  position: absolute;
  right: -4px;
  bottom: -1px;
  border: 6px solid transparent;
  border-top: 6px solid #000;
  border-bottom: 0;
}
.drop.lit::before {
  content: "";
  position: absolute;
  right: -5px;
  bottom: -3px;
  width: 13px;
  height: 13px;
  background: #fff;
}
.work {
  display: flex;
  flex: 1;
  min-height: 0;
  border-top: 2px solid #66666e;
}
.view {
  position: relative;
  flex: 1;
  min-width: 0;
  border-top: 3px solid #8a8a8a;
  border-left: 3px solid #8a8a8e;
  background: linear-gradient(#333362, #3f3f6d 35%, #474777 62%, #606088 72%, #8686a4 87%, #adadbf);
}
.scene {
  position: absolute;
  inset: 0;
  width: 100%;
  height: 100%;
}
.mark {
  font-size: 19px;
  fill: #f0e000;
}
.axis {
  font-size: 19px;
  fill: #f4f4f8;
}
.tree {
  position: relative;
  list-style: none;
  margin: 0;
  padding: 12px 0 0 1px;
  color: #fff;
  font-size: 28px;
  line-height: 44px;
}
.tree li {
  position: relative;
  display: flex;
  align-items: flex-start;
}
.root {
  height: 60px;
}
.rooticon {
  width: 48px;
  height: 50px;
}
.name {
  margin-top: 10px;
  padding: 0 1px;
  background: #333363;
}
.name.plain {
  margin: 12px 0 0 7px;
  background: none;
}
.node {
  height: 59px;
  padding-left: 41px;
}
.nodeicon {
  width: 48px;
  height: 50px;
  margin-right: 6px;
}
.node::before {
  content: "";
  position: absolute;
  left: 14px;
  top: -15px;
  width: 26px;
  height: 40px;
  border-left: 3px solid #fff;
  border-bottom: 3px solid #fff;
  box-sizing: content-box;
}
.node + .node::before {
  top: -33px;
  height: 58px;
}
.expand {
  position: absolute;
  left: 3px;
  top: 13px;
  width: 26px;
  height: 26px;
}
.expand svg {
  display: block;
}
.side {
  flex: none;
  width: 57px;
  box-sizing: border-box;
  padding: 10px 0 0 7px;
  background: linear-gradient(90deg, #fff, #fbfbff 10%, #cfcfe6 32%, #cfcfe5 78%, #a0a0b4);
}
.sgroup {
  padding-bottom: 14px;
}
.sgroup::before {
  content: "";
  display: block;
  width: 25px;
  height: 2px;
  margin-bottom: 6px;
  background: #fff;
  border-bottom: 2px solid #a4a4b0;
}
.side .tool {
  width: 40px;
  height: 46px;
  margin: 0 0 0 4px;
}
.side .tool svg {
  width: 34px;
  height: 34px;
}
.brand {
  display: flex;
  flex-direction: column;
  flex: none;
  width: 62px;
  margin: -7px 0 0 134px;
}
.brand svg {
  width: 60px;
  height: 34px;
}
.brand span {
  margin-top: -3px;
  padding-left: 10px;
  font-family: "Open Sans", "Noto Sans", sans-serif;
  font-size: 16px;
  font-weight: 700;
  font-style: italic;
  line-height: 16px;
  color: #46328c;
}
.status {
  display: flex;
  align-items: center;
  flex: none;
  height: 35px;
  border-top: 2px solid #66666e;
  background: #cfcfe5;
}
.hint {
  flex: 1;
  padding-left: 4px;
  font-size: 17px;
  line-height: 24px;
  color: #111;
}
.command {
  width: 450px;
  height: 29px;
  box-sizing: border-box;
  margin: 0;
  padding: 0 6px;
  border: 2px solid;
  border-color: #7c7c80 #f4f4f8 #f4f4f8 #7c7c80;
  background: #fff;
  font: 16px "Noto Sans", sans-serif;
}
.flat {
  display: flex;
  align-items: center;
  justify-content: center;
  width: 51px;
  height: 33px;
  box-sizing: border-box;
  border: 2px solid;
  border-color: #fff #77777c #77777c #fff;
}
.flat svg {
  width: 30px;
  height: 30px;
  fill: none;
}
</style>
